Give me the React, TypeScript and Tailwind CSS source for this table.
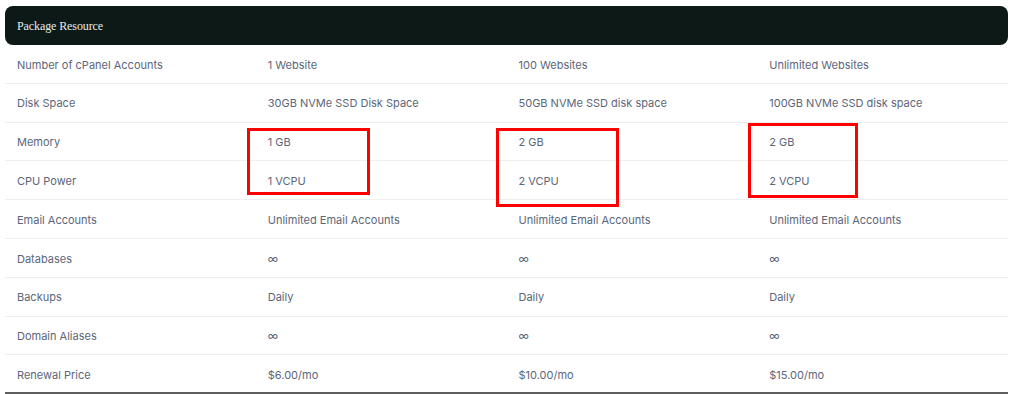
import React from "react";

const rows: [string, string, string, string][] = [
  ["Number of cPanel Accounts", "1 Website", "100 Websites", "Unlimited Websites"],
  ["Disk Space", "30GB NVMe SSD Disk Space", "50GB NVMe SSD disk space", "100GB NVMe SSD disk space"],
  ["Memory", "1 GB", "2 GB", "2 GB"],
  ["CPU Power", "1 VCPU", "2 VCPU", "2 VCPU"],
  ["Email Accounts", "Unlimited Email Accounts", "Unlimited Email Accounts", "Unlimited Email Accounts"],
  ["Databases", "∞", "∞", "∞"],
  ["Backups", "Daily", "Daily", "Daily"],
  ["Domain Aliases", "∞", "∞", "∞"],
  ["Renewal Price", "$6.00/mo", "$10.00/mo", "$15.00/mo"],
];

export default function App() {
  return (
    <div className="w-[1024px] h-[394px] bg-white overflow-hidden pt-[6px]">
      <div className="relative ml-[5px] w-[1003px]">
        <div
          className="h-[39px] rounded-[8px] bg-[#0c1917] flex items-center pl-[12px] text-[12px] text-[#e8ecea] tracking-[-0.1px]"
          style={{ fontFamily: '"Liberation Serif", "DejaVu Serif", serif' }}
        >
          <span className="mt-[1px]">Package Resource</span>
        </div>
        <div style={{ fontFamily: 'Inter, "Noto Sans", sans-serif' }} className="text-[11px] text-[#5c6679]">
          {rows.map((r, i) => (
            <div
              key={i}
              className={
                "grid grid-cols-4 h-[38.8px] items-center pt-[2px] " +
                (i === rows.length - 1 ? "border-b-2 border-[#5e5e5e]" : "border-b border-[#efefef]")
              }
            >
              {r.map((c, j) => (
                <div key={j} className="pl-[12px]">
                  {c}
                </div>
              ))}
            </div>
          ))}
        </div>
        <div className="absolute left-[242px] top-[122px] w-[123px] h-[67px] border-[3px] border-[#ff0000]" />
        <div className="absolute left-[491px] top-[122px] w-[123px] h-[79px] border-[3px] border-[#ff0000]" />
        <div className="absolute left-[743px] top-[117px] w-[110px] h-[75px] border-[3px] border-[#ff0000]" />
      </div>
    </div>
  );
}
